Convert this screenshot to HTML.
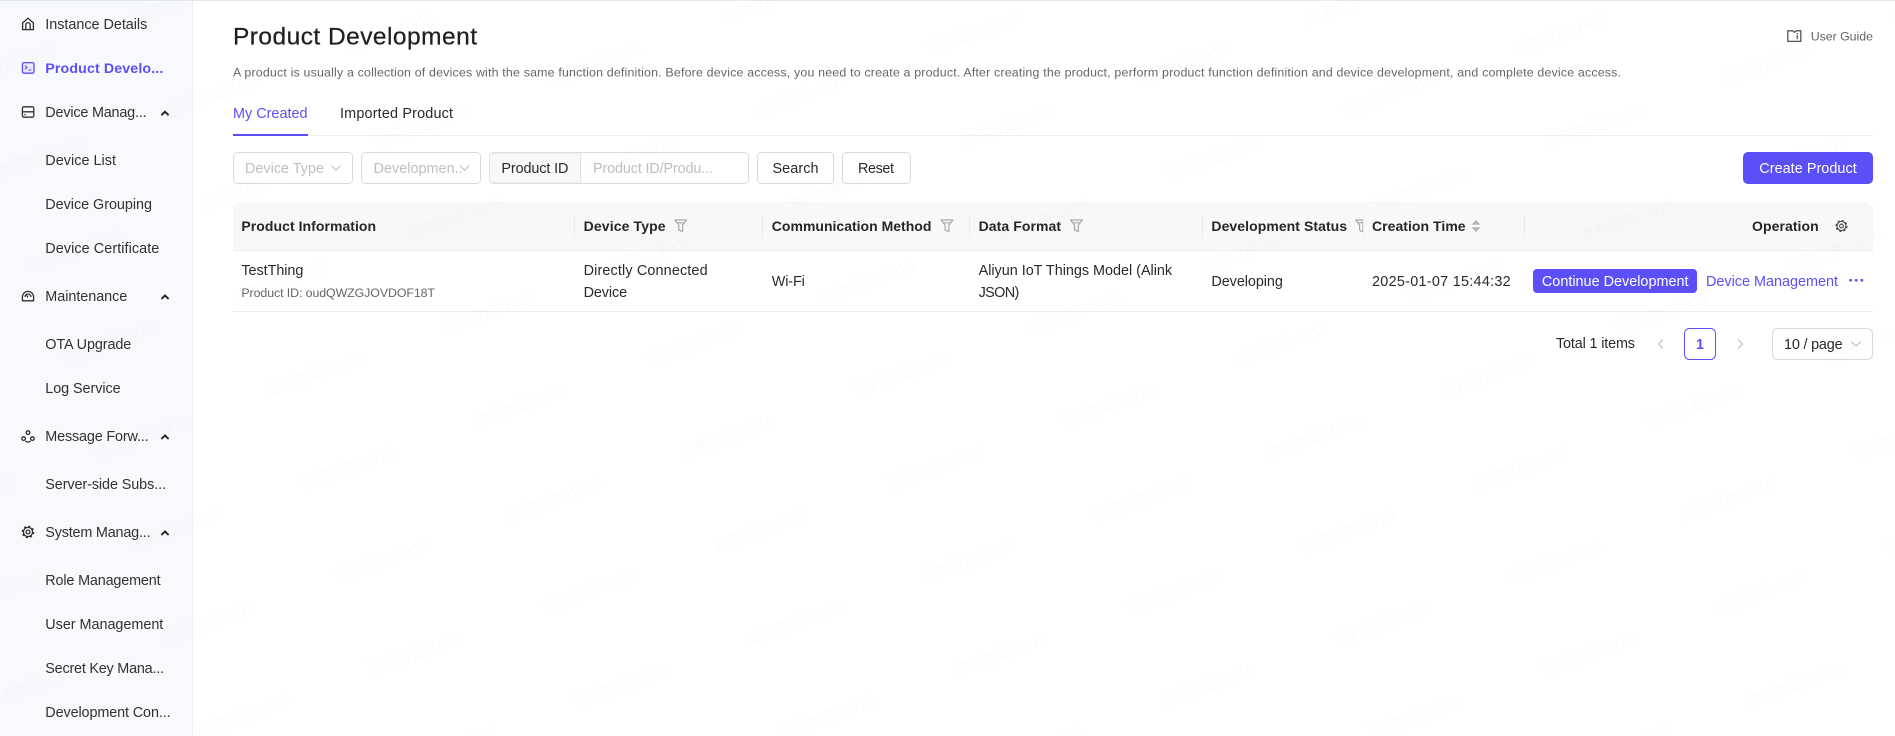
<!DOCTYPE html>
<html lang="en"><head><meta charset="utf-8"><title>Product Development</title>
<style>
html,body{margin:0;padding:0;background:#fff;width:1895px;height:736px;overflow:hidden}
svg{display:block}
text{font-family:"Liberation Sans","Noto Sans CJK SC",sans-serif;font-size:14.4px;fill:#2a2a2a;white-space:pre}
.m{font-size:14.4px;fill:#303133}
.b{font-weight:bold;font-size:14px;fill:#262626}
.g{fill:#bfbfbf}
.s{font-size:12.4px;fill:#666}
.p{fill:#5b4ff7}
.ic{fill:none;stroke:#303133;stroke-width:1.3}
.f{fill:none;stroke:#a8a8a8;stroke-width:1.2;stroke-linejoin:round}
</style></head><body>
<svg width="1895" height="736" viewBox="0 0 1895 736" xmlns="http://www.w3.org/2000/svg">
<defs>
<pattern id="wm" width="184" height="99" patternUnits="userSpaceOnUse" patternTransform="translate(728 437) rotate(-19.7) translate(-92 -50)">
<text x="92" y="55" text-anchor="middle" style="font-size:15px;fill:#000;fill-opacity:.014">涂鸦智能-1915</text>
</pattern>
</defs>
<rect width="1895" height="736" fill="#fff"/>
<rect x="0" y="0" width="192" height="736" fill="#f8f9fd"/>
<rect x="192" y="0" width="1" height="736" fill="#eef0f5"/>
<rect x="0" y="0" width="1895" height="1" fill="#e6e8f0"/>

<!-- sidebar icons -->
<g class="ic">
<path d="M22.6 29.6V23L28 18.2l5.4 4.800v6.600zM25.800 29.600v-4.800a2.200 2.200 0 0 1 4.400 0v4.800" stroke-linejoin="round"/>
<rect x="22.4" y="106.800" width="11.400" height="10.400" rx="1.600"/>
<path d="M22.4 111.800h11.400M24.400 114.600h1.400"/>
<path d="M22.400 300.800v-3.800a5.600 5.600 0 0 1 11.200 0v3.800zM25 297a3 3 0 0 1 6 0M28 297.500l-1.300-2.200" stroke-linejoin="round"/>
<circle cx="28" cy="432.600" r="1.800"/><circle cx="23.600" cy="438.600" r="1.800"/><circle cx="32.400" cy="438.600" r="1.800"/>
<path d="M25.400 441.200a5 5 0 0 0 5.200 0"/>
<circle cx="28" cy="532" r="4.600"/><circle cx="28" cy="532" r="1.900"/>
<circle cx="28" cy="532" r="5.500" stroke-width="1.500" stroke-dasharray="2.160 2.160"/>
</g>
<rect x="22.4" y="62.600" width="11.600" height="10.600" rx="1.600" fill="#e9e7fe" stroke="#5b4ff7" stroke-width="1.300"/>
<path d="M25 65.500l2 1.900-2 1.900M28.400 70h3" fill="none" stroke="#5b4ff7" stroke-width="1.100"/>
<g fill="none" stroke="#1f1f1f" stroke-width="1.900">
<path d="M161.400 115.200l3.600-3.500 3.600 3.500"/><path d="M161.400 299l3.600-3.500 3.600 3.500"/><path d="M161.400 439l3.600-3.500 3.600 3.500"/><path d="M161.400 535l3.600-3.500 3.600 3.500"/>
</g>

<!-- sidebar text -->
<text class="m" x="45.3" y="29" textLength="102" lengthAdjust="spacing">Instance Details</text>
<text x="45.3" y="73" textLength="118" lengthAdjust="spacing" style="font-weight:bold;font-size:14.2px;fill:#5b4ff7">Product Develo...</text>
<text class="m" x="45.3" y="117" textLength="101.3" lengthAdjust="spacing">Device Manag...</text>
<text class="m" x="45.3" y="165" textLength="70.7" lengthAdjust="spacing">Device List</text>
<text class="m" x="45.3" y="209" textLength="106.7" lengthAdjust="spacing">Device Grouping</text>
<text class="m" x="45.3" y="253" textLength="114" lengthAdjust="spacing">Device Certificate</text>
<text class="m" x="45.3" y="301" textLength="82" lengthAdjust="spacing">Maintenance</text>
<text class="m" x="45.3" y="349" textLength="86" lengthAdjust="spacing">OTA Upgrade</text>
<text class="m" x="45.3" y="393" textLength="75.3" lengthAdjust="spacing">Log Service</text>
<text class="m" x="45.3" y="441" textLength="103.3" lengthAdjust="spacing">Message Forw...</text>
<text class="m" x="45.3" y="489" textLength="120.7" lengthAdjust="spacing">Server-side Subs...</text>
<text class="m" x="45.3" y="537" textLength="105.3" lengthAdjust="spacing">System Manag...</text>
<text class="m" x="45.3" y="585" textLength="115.3" lengthAdjust="spacing">Role Management</text>
<text class="m" x="45.3" y="629" textLength="118" lengthAdjust="spacing">User Management</text>
<text class="m" x="45.3" y="673" textLength="118.7" lengthAdjust="spacing">Secret Key Mana...</text>
<text class="m" x="45.3" y="717" textLength="125.3" lengthAdjust="spacing">Development Con...</text>

<!-- header -->
<text x="233" y="44.5" textLength="244" lengthAdjust="spacing" style="font-size:24.5px;fill:#1f1f1f;stroke:#1f1f1f;stroke-width:.25">Product Development</text>
<text class="s" x="233" y="76.5" textLength="1388" lengthAdjust="spacing">A product is usually a collection of devices with the same function definition. Before device access, you need to create a product. After creating the product, perform product function definition and device development, and complete device access.</text>
<path d="M1787.8 30.8h5l1.7 1.5 1.7-1.5h4.6v10.6h-13z" fill="none" stroke="#555" stroke-width="1.3"/>
<rect x="1796.6" y="33" width="1.3" height="1.3" fill="#555"/><rect x="1796.6" y="35.2" width="1.3" height="4" fill="#555"/>
<text class="s" x="1810.7" y="40.5" textLength="62.3" lengthAdjust="spacing">User Guide</text>

<!-- tabs -->
<rect x="233" y="135" width="1640" height="1" fill="#efefef"/>
<text class="p" x="233" y="118" textLength="74.5" lengthAdjust="spacing">My Created</text>
<rect x="233" y="134" width="75" height="2" fill="#5b4ff7"/>
<text x="340" y="118" textLength="113" lengthAdjust="spacing">Imported Product</text>

<!-- filters -->
<g fill="#fff" stroke="#d9d9d9">
<rect x="233.5" y="152.5" width="119" height="31" rx="4"/>
<rect x="361.5" y="152.5" width="119" height="31" rx="4"/>
<rect x="489.5" y="152.5" width="259" height="31" rx="4"/>
<rect x="757.5" y="152.5" width="76" height="31" rx="4"/>
<rect x="842.5" y="152.5" width="68" height="31" rx="4"/>
</g>
<path d="M493.5 153H580.500v30h-87a4 4 0 0 1-4-4v-22a4 4 0 0 1 4-4z" fill="#f8f8f8" stroke="#e2e2e2"/>
<rect x="489" y="152" width="1" height="32" fill="#d9d9d9" opacity="0"/>
<text class="g" x="245" y="173" textLength="79" lengthAdjust="spacing">Device Type</text>
<path d="M331.500 165.500l4.500 4.800 4.500-4.800" fill="none" stroke="#bfbfbf" stroke-width="1.100"/>
<text class="g" x="373.6" y="173" textLength="89" lengthAdjust="spacing">Developmen..</text>
<path d="M460 165.500l4.500 4.800 4.500-4.800" fill="none" stroke="#bfbfbf" stroke-width="1.100"/>
<text x="501.4" y="173" textLength="67" lengthAdjust="spacing">Product ID</text>
<text class="g" x="593" y="173" textLength="120" lengthAdjust="spacing">Product ID/Produ...</text>
<text x="772.500" y="173" textLength="46" lengthAdjust="spacing">Search</text>
<text x="858" y="173" textLength="36" lengthAdjust="spacing">Reset</text>
<rect x="1743" y="152" width="130" height="32" rx="5" fill="#5b4ff7"/>
<text x="1759.3" y="173" textLength="97.4" lengthAdjust="spacing" style="fill:#fff">Create Product</text>

<!-- table -->
<path d="M241 202H1865a8 8 0 0 1 8 8V250H233V210a8 8 0 0 1 8-8z" fill="#f8f8f8"/>
<rect x="233" y="250" width="1640" height="1" fill="#ececec"/>
<rect x="233" y="311" width="1640" height="1" fill="#ececec"/>
<g fill="#ececec">
<rect x="574" y="215" width="1" height="22"/><rect x="762" y="215" width="1" height="22"/><rect x="969" y="215" width="1" height="22"/><rect x="1202" y="215" width="1" height="22"/><rect x="1524" y="215" width="1" height="22"/>
</g>
<text class="b" x="241.4" y="231" textLength="134.700" lengthAdjust="spacing">Product Information</text>
<text class="b" x="583.6" y="231" textLength="82" lengthAdjust="spacing">Device Type</text>
<text class="b" x="771.800" y="231" textLength="159.600" lengthAdjust="spacing">Communication Method</text>
<text class="b" x="978.6" y="231" textLength="82.500" lengthAdjust="spacing">Data Format</text>
<text class="b" x="1211.4" y="231" textLength="135.700" lengthAdjust="spacing">Development Status</text>
<text class="b" x="1372" y="231" textLength="93.600" lengthAdjust="spacing">Creation Time</text>
<text class="b" x="1752" y="231" textLength="66.700" lengthAdjust="spacing">Operation</text>

<g class="f">
<path d="M674.800 220h11.800l-4 5v6.400l-3.800-1.400v-5zM676.600 222.800h8.200"/>
<path d="M941.100 220h11.800l-4 5v6.400l-3.800-1.400v-5zM942.900 222.800h8.200"/>
<path d="M1070.500 220h11.800l-4 5v6.400l-3.800-1.400v-5zM1072.300 222.800h8.200"/>
<path d="M1355.600 220h7.400v11.400h-1.200l-2.200-1.400v-5zM1357.400 222.800h5.600"/>
</g>
<rect x="1363" y="215" width="1" height="22" fill="#ececec"/>
<path d="M1476 219.700l4.400 5h-8.800zM1476 232.300l4.400-5h-8.800z" fill="#b5b5b5"/>
<g fill="none" stroke="#4a4a4a" stroke-width="1.100">
<circle cx="1841.500" cy="226" r="4.500"/><circle cx="1841.500" cy="226" r="1.900"/>
<circle cx="1841.500" cy="226" r="5.400" stroke-width="1.300" stroke-dasharray="2.120 2.120"/>
</g>

<text x="241.4" y="275" textLength="62" lengthAdjust="spacing">TestThing</text>
<text class="s" x="241.4" y="297" textLength="193.600" lengthAdjust="spacing">Product ID: oudQWZGJOVDOF18T</text>
<text x="583.6" y="275" textLength="124" lengthAdjust="spacing">Directly Connected</text>
<text x="583.6" y="297" textLength="43.500" lengthAdjust="spacing">Device</text>
<text x="771.800" y="286" textLength="33" lengthAdjust="spacing">Wi-Fi</text>
<text x="978.6" y="275" textLength="193.500" lengthAdjust="spacing">Aliyun IoT Things Model (Alink</text>
<text x="978.6" y="297" textLength="40.700" lengthAdjust="spacing">JSON)</text>
<text x="1211.4" y="286" textLength="71.500" lengthAdjust="spacing">Developing</text>
<text x="1372" y="286" textLength="138.700" lengthAdjust="spacing">2025-01-07 15:44:32</text>
<rect x="1533" y="269" width="164" height="24" rx="4" fill="#5b4ff7"/>
<text x="1541.900" y="286" textLength="146.600" lengthAdjust="spacing" style="fill:#fff">Continue Development</text>
<text class="p" x="1706" y="286" textLength="132" lengthAdjust="spacing">Device Management</text>
<circle cx="1850.500" cy="280.300" r="1.400" fill="#5b4ff7"/><circle cx="1856.200" cy="280.300" r="1.400" fill="#5b4ff7"/><circle cx="1861.900" cy="280.300" r="1.400" fill="#5b4ff7"/>

<!-- pagination -->
<text x="1556" y="348" textLength="79" lengthAdjust="spacing">Total 1 items</text>
<path d="M1663 339.500l-4.500 4.500 4.500 4.500" fill="none" stroke="#bdbdbd" stroke-width="1.200"/>
<rect x="1684.500" y="328.500" width="31" height="31" rx="5" fill="#fff" stroke="#5b4ff7"/>
<text x="1700" y="349" text-anchor="middle" style="fill:#5b4ff7;font-weight:bold">1</text>
<path d="M1738 339.500l4.500 4.500-4.500 4.500" fill="none" stroke="#bdbdbd" stroke-width="1.200"/>
<rect x="1772.500" y="328.500" width="100" height="31" rx="5" fill="#fff" stroke="#d9d9d9"/>
<text x="1784" y="349" textLength="58.600" lengthAdjust="spacing">10 / page</text>
<path d="M1851 341.500l5 4.500 5-4.500" fill="none" stroke="#bfbfbf" stroke-width="1.100"/>

<!-- watermark -->
<rect width="1895" height="736" fill="url(#wm)"/>
</svg>
</body></html>
